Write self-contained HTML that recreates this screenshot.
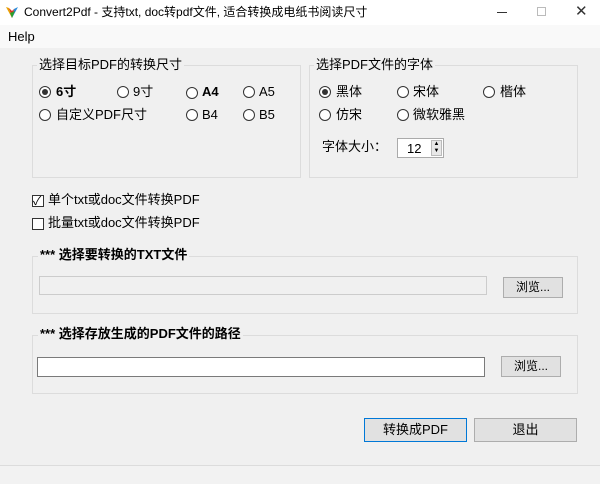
<!DOCTYPE html>
<html><head><meta charset="utf-8"><style>
*{margin:0;padding:0;box-sizing:border-box}
body{width:600px;height:484px;background:#f0f0f0;font-family:"Liberation Sans","Noto Sans CJK SC",sans-serif;font-size:12px;color:#000;position:relative;overflow:hidden}
.a{position:absolute;white-space:nowrap}
.g{position:absolute;border:1px solid #dcdcdc}
.gt{position:absolute;background:#f0f0f0;padding:0 2px;font-size:13px;line-height:16px}
.r{position:absolute;width:12px;height:12px;border:1px solid #333;border-radius:50%;background:#fff}
.r.on::after{content:"";position:absolute;left:2px;top:2px;width:6px;height:6px;border-radius:50%;background:#333}
.l{position:absolute;font-size:13px;line-height:16px;white-space:nowrap}
.cb{position:absolute;width:12px;height:12px;border:1px solid #333;background:#fff}
.btn{position:absolute;background:#e1e1e1;border:1px solid #adadad;text-align:center;font-size:12px}
</style></head><body>
<div class="a" style="left:0;top:0;width:600px;height:25px;background:#fff"></div>
<svg class="a" style="left:5px;top:5px" width="14" height="14" viewBox="0 0 14 14"><path d="M1 2 L7 13 L4 3Z" fill="#e8a000"/><path d="M7 13 L13 2 L9 4Z" fill="#2a8ad8"/><path d="M4 3 L7 13 L9 4 L7 6Z" fill="#e03020"/><path d="M5 8 L7 13 L10 6Z" fill="#2ca02c"/></svg>
<div class="a" style="left:24px;top:4px;font-size:12px;line-height:16px">Convert2Pdf - 支持txt, doc转pdf文件, 适合转换成电纸书阅读尺寸</div>
<div class="a" style="left:497px;top:12px;width:10px;height:1px;background:#333"></div>
<div class="a" style="left:537px;top:7px;width:9px;height:9px;border:1px solid #bbb"></div>
<div class="a" style="left:575px;top:2px;font-size:15px;color:#333">✕</div>
<div class="a" style="left:0;top:25px;width:600px;height:23px;background:#f9f9f9"></div>
<div class="a" style="left:8px;top:29px;font-size:13px;line-height:16px">Help</div>

<div class="g" style="left:32px;top:65px;width:269px;height:113px"></div>
<div class="gt" style="left:37px;top:57px">选择目标PDF的转换尺寸</div>
<div class="r on" style="left:39px;top:86px"></div><div class="l" style="left:56px;top:84px;font-weight:bold">6寸</div>
<div class="r" style="left:117px;top:86px"></div><div class="l" style="left:133px;top:84px">9寸</div>
<div class="r" style="left:186px;top:87px"></div><div class="l" style="left:202px;top:84px;font-weight:bold">A4</div>
<div class="r" style="left:243px;top:86px"></div><div class="l" style="left:259px;top:84px">A5</div>
<div class="r" style="left:39px;top:109px"></div><div class="l" style="left:56px;top:107px">自定义PDF尺寸</div>
<div class="r" style="left:186px;top:109px"></div><div class="l" style="left:202px;top:107px">B4</div>
<div class="r" style="left:243px;top:109px"></div><div class="l" style="left:259px;top:107px">B5</div>

<div class="g" style="left:309px;top:65px;width:269px;height:113px"></div>
<div class="gt" style="left:314px;top:57px">选择PDF文件的字体</div>
<div class="r on" style="left:319px;top:86px"></div><div class="l" style="left:336px;top:84px">黑体</div>
<div class="r" style="left:397px;top:86px"></div><div class="l" style="left:413px;top:84px">宋体</div>
<div class="r" style="left:483px;top:86px"></div><div class="l" style="left:500px;top:84px">楷体</div>
<div class="r" style="left:319px;top:109px"></div><div class="l" style="left:336px;top:107px">仿宋</div>
<div class="r" style="left:397px;top:109px"></div><div class="l" style="left:413px;top:107px">微软雅黑</div>
<div class="l" style="left:322px;top:139px">字体大小：</div>
<div class="a" style="left:397px;top:138px;width:47px;height:20px;border:1px solid #aaa;background:#fff"></div>
<div class="l" style="left:407px;top:141px">12</div>
<div class="a" style="left:431px;top:140px;width:11px;height:16px;background:#e8e8e8;border:1px solid #bbb;font-size:6px;line-height:7px;text-align:center">▲<br>▼</div>

<div class="cb" style="left:32px;top:195px"></div><div class="a" style="left:33px;top:192px;font-size:12px">✓</div>
<div class="l" style="left:48px;top:192px">单个txt或doc文件转换PDF</div>
<div class="cb" style="left:32px;top:218px"></div>
<div class="l" style="left:48px;top:215px">批量txt或doc文件转换PDF</div>

<div class="g" style="left:32px;top:256px;width:546px;height:58px"></div>
<div class="gt" style="left:38px;top:247px;font-weight:bold">*** 选择要转换的TXT文件</div>
<div class="a" style="left:39px;top:276px;width:448px;height:19px;border:1px solid #ccc;background:#f0f0f0"></div>
<div class="btn" style="left:503px;top:277px;width:60px;height:21px;line-height:19px">浏览...</div>

<div class="g" style="left:32px;top:335px;width:546px;height:59px"></div>
<div class="gt" style="left:38px;top:326px;font-weight:bold">*** 选择存放生成的PDF文件的路径</div>
<div class="a" style="left:37px;top:357px;width:448px;height:20px;border:1px solid #7a7a7a;background:#fff"></div>
<div class="btn" style="left:501px;top:356px;width:60px;height:21px;line-height:19px">浏览...</div>

<div class="btn" style="left:364px;top:418px;width:103px;height:24px;line-height:22px;border:1px solid #0078d7;font-size:13px">转换成PDF</div>
<div class="btn" style="left:474px;top:418px;width:103px;height:24px;line-height:22px;font-size:13px">退出</div>

<div class="a" style="left:0;top:465px;width:600px;height:1px;background:#dcdcdc"></div>
<div class="a" style="left:0;top:466px;width:600px;height:18px;background:#f2f2f2"></div>
</body></html>
